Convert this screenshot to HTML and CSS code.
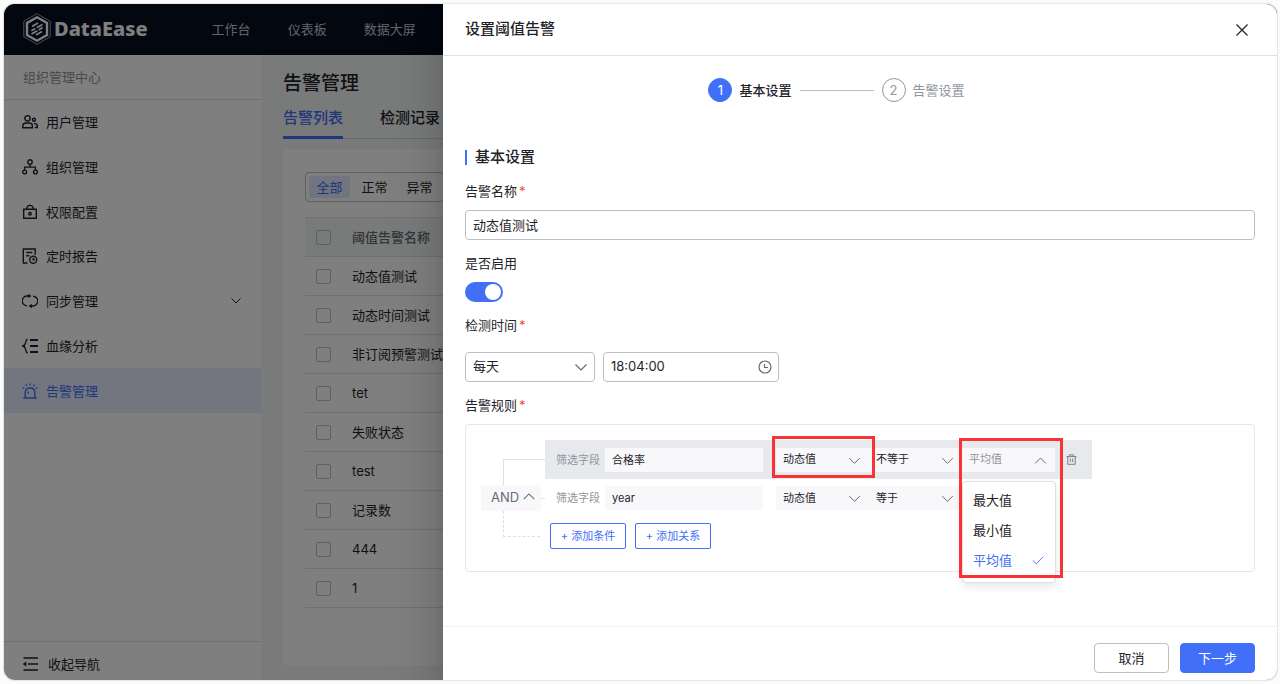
FILE: index.html
```html
<!DOCTYPE html>
<html lang="zh-CN">
<head>
<meta charset="utf-8">
<meta name="viewport" content="width=device-width, initial-scale=1">
<title>DataEase</title>
<link rel="stylesheet" href="styles.css">
</head>
<body>
<div class="window">
  <header class="topbar">
    <a class="brand" href="#">
      <svg class="brand-mark" viewBox="0 0 28 32" fill="none" stroke="currentColor" aria-hidden="true">
        <path d="M14 .7 27.2 8.300v15.400L14 31.300.8 23.700V8.300z" stroke-width=".6"/>
        <path d="M14 4.300 24 10v12l-10 5.700L4 22V10z" stroke-width="2.400"/>
        <path d="M9 13.600l6-3.500M8.300 17.800l4-2.300M13.700 14.700l5.800-3.300M8.500 21l5.800-3.300M15.700 16.900l4-2.300M13 22l6-3.500" stroke-width="1.700"/>
      </svg>
      <span>DataEase</span>
    </a>
    <nav class="topnav">
      <a href="#">工作台</a>
      <a href="#">仪表板</a>
      <a href="#">数据大屏</a>
    </nav>
  </header>

  <div class="app">
    <aside class="sidebar">
      <div class="sidebar-title">组织管理中心</div>
      <nav class="menu">
        <a class="menu-item" href="#">
          <svg class="icon" viewBox="0 0 16 16"><circle cx="5.500" cy="4.300" r="2.700"/><path d="M.8 13.800v-1.600c0-2 1.300-3.200 3.200-3.200h3.200c1.900 0 3.200 1.200 3.200 3.200v1.600z"/><circle cx="12" cy="5.800" r="1.500"/><path d="M11.800 9.600h1c1.500 0 2.500 1 2.500 2.400v1.500h-2.400"/></svg>
          <span>用户管理</span>
        </a>
        <a class="menu-item" href="#">
          <svg class="icon" viewBox="0 0 16 16"><circle cx="8" cy="3" r="2.200"/><circle cx="2.600" cy="13" r="1.900"/><circle cx="13.400" cy="13" r="1.900"/><path d="M8 5.200v2.900M2.600 11V8.100h10.800V11"/></svg>
          <span>组织管理</span>
        </a>
        <a class="menu-item" href="#">
          <svg class="icon" viewBox="0 0 16 16"><path d="M1.700 5.300h12.600v9H1.700zM4.800 5.300c0-2.500 1.200-3.900 3.200-3.900s3.200 1.400 3.200 3.900"/><circle cx="8" cy="9.700" r="1.300"/></svg>
          <span>权限配置</span>
        </a>
        <a class="menu-item" href="#">
          <svg class="icon" viewBox="0 0 16 16"><path d="M5.500 15H1.300V1h11.900v5.800M4.200 4.500h6.200M4.200 7.800h3"/><circle cx="11.200" cy="11.800" r="3.500"/><path d="M11.200 9.900v2h1.800"/></svg>
          <span>定时报告</span>
        </a>
        <a class="menu-item" href="#">
          <svg class="icon" viewBox="0 0 16 16"><path d="M4.800 12.800A4.900 4.900 0 0 1 5.500 3h3M11.200 3.200a4.900 4.900 0 0 1-.7 9.800h-3"/><path class="solid" d="M6.200.8 9.200 3 6.200 5.200zM9.800 10.800l-3 2.200 3 2.200z"/></svg>
          <span>同步管理</span>
          <svg class="icon menu-arrow" viewBox="0 0 16 16"><path d="M3.500 5.500 8 10l4.500-4.500"/></svg>
        </a>
        <a class="menu-item" href="#">
          <svg class="icon" viewBox="0 0 16 16"><path d="M5.500.8C4 1.500 4 3.200 3.500 5L2 8l1.500 3c.5 1.800.5 3.500 2 4.200"/><path d="M8 2h8M8 8h8M8 14h8" stroke-width="1.800"/><circle class="solid" cx="1.300" cy="8" r="1.300"/></svg>
          <span>血缘分析</span>
        </a>
        <a class="menu-item is-active" href="#" aria-current="page">
          <svg class="icon" viewBox="0 0 16 16"><path d="M1.300 15h13.400M3.200 15V9.500C3.200 6.700 5 5 8 5s4.800 1.700 4.800 4.500V15M6.200 8.500v2"/><path d="M8 .5v1.800M3.800 1.500l.8 1.600M12.200 1.500l-.8 1.600M.8 4.500l1.500 1M15.200 4.500l-1.500 1"/></svg>
          <span>告警管理</span>
        </a>
      </nav>
      <button class="collapse" type="button">
        <svg class="icon" viewBox="0 0 16 16"><path d="M1.500 2H16M6 8h10M1.500 14H16" stroke-width="1.500"/><path class="solid" d="M4.300 5.500v5L.8 8z"/></svg>
        <span>收起导航</span>
      </button>
    </aside>

    <main class="main">
      <h1 class="page-title">告警管理</h1>
      <div class="tabs">
        <a class="tab is-active" href="#">告警列表</a>
        <a class="tab" href="#">检测记录</a>
      </div>
      <section class="card">
        <div class="segmented">
          <button class="segment is-active" type="button">全部</button>
          <button class="segment" type="button">正常</button>
          <button class="segment" type="button">异常</button>
        </div>
        <table class="table">
          <thead>
            <tr><th class="col-check"><input class="check" type="checkbox" aria-label="全选"></th><th>阈值告警名称</th></tr>
          </thead>
          <tbody>
            <tr><td class="col-check"><input class="check" type="checkbox" aria-label="动态值测试"></td><td>动态值测试</td></tr>
            <tr><td class="col-check"><input class="check" type="checkbox" aria-label="动态时间测试"></td><td>动态时间测试</td></tr>
            <tr><td class="col-check"><input class="check" type="checkbox" aria-label="非订阅预警测试"></td><td>非订阅预警测试</td></tr>
            <tr><td class="col-check"><input class="check" type="checkbox" aria-label="tet"></td><td>tet</td></tr>
            <tr><td class="col-check"><input class="check" type="checkbox" aria-label="失败状态"></td><td>失败状态</td></tr>
            <tr><td class="col-check"><input class="check" type="checkbox" aria-label="test"></td><td>test</td></tr>
            <tr><td class="col-check"><input class="check" type="checkbox" aria-label="记录数"></td><td>记录数</td></tr>
            <tr><td class="col-check"><input class="check" type="checkbox" aria-label="444"></td><td>444</td></tr>
            <tr><td class="col-check"><input class="check" type="checkbox" aria-label="1"></td><td>1</td></tr>
          </tbody>
        </table>
      </section>
    </main>
  </div>

  <div class="overlay">
    <section class="drawer" role="dialog" aria-labelledby="drawer-title">
      <header class="drawer-head">
        <h2 class="drawer-title" id="drawer-title">设置阈值告警</h2>
        <button class="close" type="button" aria-label="关闭">
          <svg class="icon" viewBox="0 0 16 16"><path d="M2.500 2.500l11 11M13.500 2.500l-11 11"/></svg>
        </button>
      </header>

      <form class="drawer-body">
        <ol class="steps">
          <li class="step is-current"><span class="step-num">1</span><span>基本设置</span></li>
          <li class="step-line" aria-hidden="true"></li>
          <li class="step"><span class="step-num">2</span><span>告警设置</span></li>
        </ol>

        <h3 class="section-title">基本设置</h3>

        <div class="field">
          <label class="label required" for="name">告警名称</label>
          <input class="control" id="name" type="text" value="动态值测试">
        </div>

        <div class="field">
          <label class="label" for="enabled">是否启用</label>
          <input class="switch" id="enabled" type="checkbox" role="switch" checked>
        </div>

        <div class="field field-time">
          <label class="label required" for="cycle">检测时间</label>
          <div class="time-row">
            <div class="control-wrap cycle">
              <select class="control" id="cycle"><option>每天</option></select>
              <svg class="icon control-icon" viewBox="0 0 16 16"><path d="M2.500 5.500 8 11l5.500-5.500"/></svg>
            </div>
            <div class="control-wrap clock">
              <input class="control" type="text" value="18:04:00" aria-label="时间">
              <svg class="icon control-icon" viewBox="0 0 16 16"><circle cx="8" cy="8" r="6"/><path d="M7.500 5v3.500H11"/></svg>
            </div>
          </div>
        </div>

        <div class="field">
          <span class="label required" id="rule-label">告警规则</span>
          <div class="rules" role="group" aria-labelledby="rule-label">
            <div class="logic">
              <span class="link-top"></span>
              <div class="logic-row">
                <button class="logic-btn" type="button">AND
                  <svg class="icon" viewBox="0 0 16 16"><path d="M2 10.500 8 4.500l6 6"/></svg>
                </button>
                <span class="link-side"></span>
              </div>
              <span class="link-bottom"></span>
            </div>
            <div class="conditions">
              <div class="condition is-hover">
                <label class="condition-label" for="field-1">筛选字段</label>
                <input class="mini field-name" id="field-1" type="text" value="合格率">
                <div class="mini-wrap">
                  <select class="mini" aria-label="取值方式"><option>动态值</option></select>
                  <svg class="icon mini-icon" viewBox="0 0 16 16"><path d="M1.500 5 8 11.500 14.500 5"/></svg>
                </div>
                <div class="mini-wrap">
                  <select class="mini" aria-label="比较方式"><option>不等于</option></select>
                  <svg class="icon mini-icon" viewBox="0 0 16 16"><path d="M1.500 5 8 11.500 14.500 5"/></svg>
                </div>
                <div class="mini-wrap">
                  <button class="mini is-open" type="button" aria-haspopup="listbox" aria-expanded="true">平均值</button>
                  <svg class="icon mini-icon" viewBox="0 0 16 16"><path d="M1.500 11.500 8 5l6.500 6.500"/></svg>
                  <ul class="dropdown" role="listbox">
                    <li class="option" role="option">最大值</li>
                    <li class="option" role="option">最小值</li>
                    <li class="option is-selected" role="option" aria-selected="true">平均值
                      <svg class="icon" viewBox="0 0 16 16"><path d="M1 8.500 5.800 13 15 3.500"/></svg>
                    </li>
                  </ul>
                </div>
                <button class="delete" type="button" aria-label="删除">
                  <svg class="icon" viewBox="0 0 16 16"><path d="M.8 3.800h14.400M5 3.500V1.200h6v2.300M2.600 4v11h10.800V4M6.300 6.800v5M9.700 6.800v5"/></svg>
                </button>
              </div>
              <div class="condition">
                <label class="condition-label" for="field-2">筛选字段</label>
                <input class="mini field-name" id="field-2" type="text" value="year">
                <div class="mini-wrap">
                  <select class="mini" aria-label="取值方式"><option>动态值</option></select>
                  <svg class="icon mini-icon" viewBox="0 0 16 16"><path d="M1.500 5 8 11.500 14.500 5"/></svg>
                </div>
                <div class="mini-wrap">
                  <select class="mini" aria-label="比较方式"><option>等于</option></select>
                  <svg class="icon mini-icon" viewBox="0 0 16 16"><path d="M1.500 5 8 11.500 14.500 5"/></svg>
                </div>
              </div>
              <div class="add-row">
                <button class="add" type="button">+ 添加条件</button>
                <button class="add" type="button">+ 添加关系</button>
              </div>
            </div>
            <span class="mark mark-type"></span>
            <span class="mark mark-value"></span>
          </div>
        </div>
      </form>

      <footer class="drawer-foot">
        <button class="btn" type="button">取消</button>
        <button class="btn btn-primary" type="button">下一步</button>
      </footer>
    </section>
  </div>
</div>
</body>
</html>
```

FILE: styles.css
```css
:root {
  --ink: #1f2329;
  --muted: #8f959e;
  --blue: #416ff7;
  --line: #dee0e3;
  --fill: #f8f8fa;
}

* {
  box-sizing: border-box;
}

body {
  margin: 0;
  background: #fcfcfc;
  color: var(--ink);
  font: 13px/20px Inter, "Noto Sans CJK SC", sans-serif;
}

h1, h2, h3, ol, ul {
  margin: 0;
  padding: 0;
  list-style: none;
}

a {
  color: inherit;
  text-decoration: none;
}

button, input, select {
  margin: 0;
  font: inherit;
  color: inherit;
}

button {
  padding: 0;
  border: 0;
  background: none;
  cursor: pointer;
}

.icon {
  flex: none;
  width: 16px;
  height: 16px;
  fill: none;
  stroke: currentColor;
  stroke-width: 1.2;
}

.icon .solid {
  fill: currentColor;
  stroke: none;
}

.window {
  position: relative;
  display: flex;
  flex-direction: column;
  height: calc(100vh - 8px);
  min-height: 640px;
  margin: 4px 3px 4px 4px;
  overflow: hidden;
  border-radius: 11px;
  background: #fff;
  box-shadow: 0 0 0 1px #e6e6e6, 0 0 3px rgba(0, 0, 0, 0.1);
}

/* top bar */

.topbar {
  display: flex;
  flex: none;
  align-items: center;
  gap: 64px;
  height: 51px;
  padding: 0 0 2px 19px;
  background: #050e21;
}

.brand {
  display: flex;
  align-items: center;
  gap: 3px;
  color: #fff;
  font: 800 20px/28px "Noto Sans", sans-serif;
}

.brand-mark {
  width: 28px;
  height: 32px;
}

.topnav {
  display: flex;
  gap: 37px;
  color: #c4c8ce;
}

.app {
  display: flex;
  flex: 1;
  min-height: 0;
}

/* sidebar */

.sidebar {
  display: flex;
  flex: none;
  flex-direction: column;
  width: 257px;
}

.sidebar-title {
  height: 45px;
  padding: 12px 19px;
  border-bottom: 1px solid var(--line);
  color: var(--muted);
}

.menu {
  display: grid;
  grid-template-rows: repeat(7, 1fr);
  height: 313px;
}

.menu-item {
  display: flex;
  align-items: center;
  gap: 8px;
  padding: 0 17px 0 18px;
}

.menu-item .icon {
  stroke-width: 1.4;
}

.menu-item.is-active {
  background: #e6edff;
  color: var(--blue);
}

.menu-item .menu-arrow {
  margin-left: auto;
  stroke-width: 1;
}

.collapse {
  display: flex;
  align-items: center;
  gap: 10px;
  height: 39px;
  margin-top: auto;
  padding: 6px 18px 0;
  border-top: 1px solid var(--line);
}

/* list page */

.main {
  display: flex;
  flex: 1;
  flex-direction: column;
  padding: 16px 22px 15px;
  background: #f3f6f5;
}

.page-title {
  font-size: 19px;
  line-height: 26px;
  font-weight: 500;
}

.tabs {
  display: flex;
  gap: 37px;
  margin-top: 7px;
  border-bottom: 1px solid #cfd2d6;
  font-size: 15px;
  line-height: 28px;
  font-weight: 500;
}

.tab {
  height: 35px;
  margin-bottom: -1px;
  border-bottom: 3px solid transparent;
}

.tab.is-active {
  border-bottom-color: var(--blue);
  color: var(--blue);
}

.card {
  display: flex;
  flex: 1;
  flex-direction: column;
  align-items: flex-start;
  gap: 15px;
  margin-top: 10px;
  padding: 23px 22px;
  background: #fff;
}

.segmented {
  display: flex;
  gap: 4px;
  padding: 3px;
  border: 1px solid #bbbfc4;
  border-radius: 4px;
}

.segment {
  width: 41px;
  height: 22px;
  border-radius: 3px;
  line-height: 20px;
}

.segment.is-active {
  background: #e3eaff;
  color: var(--blue);
}

.table {
  width: 100%;
  border-collapse: collapse;
}

.table th,
.table td {
  height: 39px;
  padding: 0;
  border-bottom: 1px solid var(--line);
  text-align: left;
}

.table th {
  border-top: 1px solid var(--line);
  background: #f3f6f5;
  color: #646a73;
  font-weight: 500;
}

.table .col-check {
  width: 47px;
  padding-left: 11px;
}

.check {
  display: block;
  width: 15px;
  height: 15px;
  border: 1px solid #bbbfc4;
  border-radius: 2px;
  appearance: none;
}

/* drawer */

.overlay {
  position: absolute;
  inset: 0;
  display: flex;
  padding-left: 439px;
  background: rgba(0, 0, 0, 0.5);
}

.drawer {
  display: flex;
  flex: 1;
  flex-direction: column;
  min-width: 0;
  background: #fff;
  box-shadow: 0 16px 48px 16px rgba(0, 0, 0, 0.08), 0 12px 32px rgba(0, 0, 0, 0.12), 0 8px 16px -8px rgba(0, 0, 0, 0.16);
}

.drawer-head {
  display: flex;
  align-items: center;
  justify-content: space-between;
  height: 52px;
  padding: 0 27px 0 22px;
  border-bottom: 1px solid var(--line);
}

.drawer-title {
  padding-bottom: 2px;
  font-size: 15px;
  line-height: 22px;
  font-weight: 500;
}

.close {
  display: flex;
}

.drawer-body {
  flex: 1;
  padding: 22px 22px 0;
}

.steps {
  display: flex;
  align-items: center;
  justify-content: center;
  gap: 8px;
  padding-right: 47px;
}

.step {
  display: flex;
  align-items: center;
  gap: 7px;
  color: var(--muted);
}

.step.is-current {
  color: var(--ink);
  font-weight: 500;
}

.step-num {
  width: 24px;
  height: 24px;
  border: 1px solid var(--muted);
  border-radius: 50%;
  line-height: 22px;
  text-align: center;
}

.is-current .step-num {
  border-color: var(--blue);
  background: var(--blue);
  color: #fff;
  font-weight: 400;
}

.step-line {
  width: 74px;
  height: 1px;
  background: #bbbfc4;
}

.section-title {
  display: flex;
  align-items: center;
  gap: 8px;
  margin-top: 44px;
  font-size: 15px;
  line-height: 22px;
  font-weight: 500;
}

.section-title::before {
  width: 2px;
  height: 15px;
  background: var(--blue);
  content: "";
}

.field {
  display: flex;
  flex-direction: column;
  gap: 10px;
  margin-top: 14px;
}

.field-time {
  gap: 18px;
}

.label {
  line-height: 18px;
}

.required::after {
  margin-left: 2px;
  color: #f54a45;
  content: "*";
}

.control {
  width: 100%;
  height: 30px;
  padding: 0 7px 2px;
  border: 1px solid #bbbfc4;
  border-radius: 4px;
  background: #fff;
  appearance: none;
}

.switch {
  width: 38px;
  height: 20px;
  padding: 2px;
  border-radius: 10px;
  background: var(--blue);
  appearance: none;
}

.switch::before {
  display: block;
  width: 16px;
  height: 16px;
  margin-left: auto;
  border-radius: 50%;
  background: #fff;
  content: "";
}

.time-row {
  display: flex;
  gap: 8px;
}

.control-wrap {
  position: relative;
}

.cycle {
  width: 130px;
}

.clock {
  width: 176px;
}

.control-icon {
  position: absolute;
  top: 7px;
  right: 6px;
  color: #646a73;
  pointer-events: none;
}

/* rules */

.rules {
  position: relative;
  display: flex;
  height: 148px;
  padding: 15px 15px 0;
  border: 1px solid #e6e7ea;
  border-radius: 4px;
}

.logic {
  display: flex;
  flex: none;
  flex-direction: column;
  width: 64px;
  padding-top: 19px;
}

.link-top {
  height: 26px;
  margin-left: 22px;
  border: solid var(--line);
  border-width: 1px 0 0 1px;
}

.link-bottom {
  width: 37px;
  height: 26px;
  margin-left: 22px;
  border: dashed var(--line);
  border-width: 0 0 1px 1px;
}

.logic-row {
  display: flex;
  align-items: center;
}

.link-side {
  width: 4px;
  height: 1px;
  background: var(--line);
}

.logic-btn {
  display: flex;
  align-items: center;
  justify-content: space-between;
  width: 60px;
  height: 26px;
  padding: 0 5px 2px 10px;
  background: var(--fill);
  color: #646a73;
}

.logic-btn .icon {
  width: 14px;
  height: 14px;
}

.condition {
  display: flex;
  align-items: center;
  width: 547px;
  height: 38px;
  padding-left: 11px;
  font-size: 11px;
}

.condition.is-hover {
  height: 39px;
  background: #e8e9ed;
}

.condition-label {
  width: 49px;
  color: var(--muted);
}

.mini {
  width: 100%;
  height: 24px;
  padding: 0 7px 1px;
  border: 0;
  border-radius: 0;
  background: var(--fill);
  appearance: none;
}

.field-name {
  width: 158px;
  margin-right: 13px;
}

.mini-wrap {
  position: relative;
  width: 93px;
}

.mini.is-open {
  display: block;
  color: var(--muted);
  text-align: left;
}

.mini-icon {
  position: absolute;
  top: 6px;
  right: 8px;
  width: 13px;
  height: 13px;
  color: #646a73;
  pointer-events: none;
}

.dropdown {
  position: absolute;
  z-index: 1;
  top: 33px;
  left: 0;
  width: 94px;
  padding: 4px 0 6px;
  border: 1px solid var(--line);
  border-radius: 4px;
  background: #fff;
  box-shadow: 0 4px 8px rgba(31, 35, 41, 0.1);
  font-size: 13px;
}

.option {
  display: flex;
  align-items: center;
  justify-content: space-between;
  height: 30px;
  padding: 0 11px 2px 10px;
}

.option.is-selected {
  color: var(--blue);
}

.option .icon {
  width: 12px;
  height: 12px;
}

.delete {
  display: flex;
  margin-left: 11px;
  color: #646a73;
}

.delete .icon {
  width: 11px;
  height: 11px;
}

.add-row {
  display: flex;
  gap: 9px;
  padding: 6px 0 0 5px;
}

.add {
  width: 76px;
  height: 26px;
  border: 1px solid var(--blue);
  border-radius: 2px;
  color: var(--blue);
  font-size: 11px;
}

.mark {
  position: absolute;
  z-index: 2;
  border: 3px solid #f93333;
  pointer-events: none;
}

.mark-type {
  top: 11px;
  left: 306px;
  width: 103px;
  height: 42px;
}

.mark-value {
  top: 13px;
  left: 493px;
  width: 104px;
  height: 140px;
}

.drawer-foot {
  display: flex;
  justify-content: flex-end;
  gap: 11px;
  padding: 16px 22px 7px;
  border-top: 1px solid #f2f3f5;
}

.btn {
  width: 75px;
  height: 30px;
  border: 1px solid #bbbfc4;
  border-radius: 4px;
  background: #fff;
}

.btn-primary {
  border-color: var(--blue);
  background: var(--blue);
  color: #fff;
}
```
